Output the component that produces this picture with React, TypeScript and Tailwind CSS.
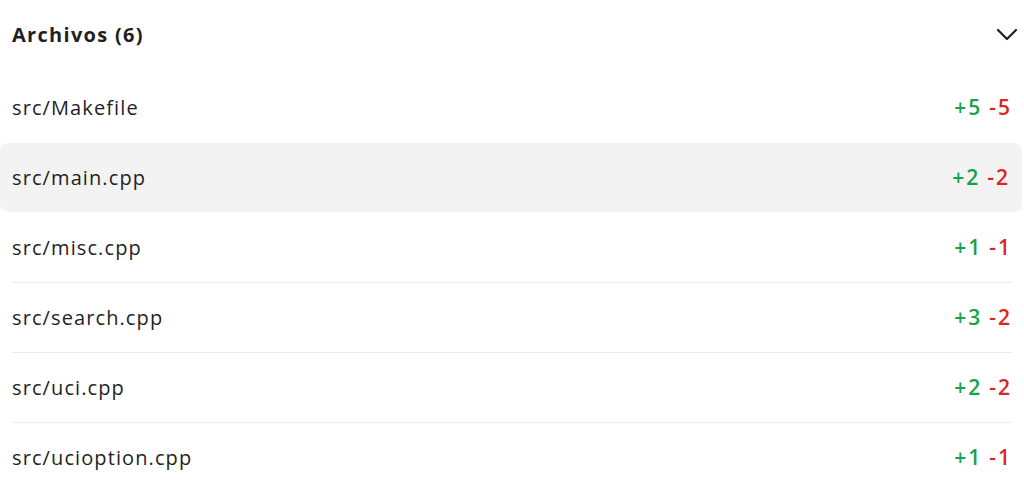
import { useState } from 'react';

interface FileChange {
    path: string;
    added: number;
    removed: number;
}

const files: FileChange[] = [
    { path: 'src/Makefile', added: 5, removed: 5 },
    { path: 'src/main.cpp', added: 2, removed: 2 },
    { path: 'src/misc.cpp', added: 1, removed: 1 },
    { path: 'src/search.cpp', added: 3, removed: 2 },
    { path: 'src/uci.cpp', added: 2, removed: 2 },
    { path: 'src/ucioption.cpp', added: 1, removed: 1 },
];

function Chevron() {
    return (
        <svg width="22" height="14" viewBox="0 0 22 14" fill="none">
            <polyline points="2,2 11,11 20,2" stroke="#1f1f1f" strokeWidth="2.2" strokeLinecap="round" strokeLinejoin="round" />
        </svg>
    );
}

export default function App() {
    const [hovered] = useState(1);

    return (
        <div className="w-[1024px] h-[499px] bg-white overflow-hidden font-['Open_Sans',sans-serif] text-[#1f1f1f]">
            <div className="flex items-center justify-between h-[72px] px-3 pb-[2px]">
                <p className="text-[20px] font-bold tracking-[1.3px]">Archivos ({files.length})</p>
                <span className="mr-[-6px]"><Chevron /></span>
            </div>
            <div className="flex flex-col">
                {files.map((file, i) => {
                    const showLine = i > 0 && i !== hovered && i !== hovered + 1;
                    return (
                        <div key={file.path} className="flex flex-col">
                            <div className={showLine ? 'h-px mx-3 bg-[#ececec]' : 'h-px mx-3 bg-transparent'} />
                            <div className={`flex items-center justify-between h-[69px] px-3 rounded-lg ${i === hovered ? 'bg-[#f3f3f3] mr-[2px]' : ''}`}>
                                <p className="text-[20px] tracking-[1.1px]">{file.path}</p>
                                <p className="text-[21px] font-semibold tracking-[2px]">
                                    <span className="text-[#16a34a]">+{file.added}</span>
                                    <span className="text-[#dc2626] ml-[7px]">-{file.removed}</span>
                                </p>
                            </div>
                        </div>
                    );
                })}
            </div>
        </div>
    );
}
